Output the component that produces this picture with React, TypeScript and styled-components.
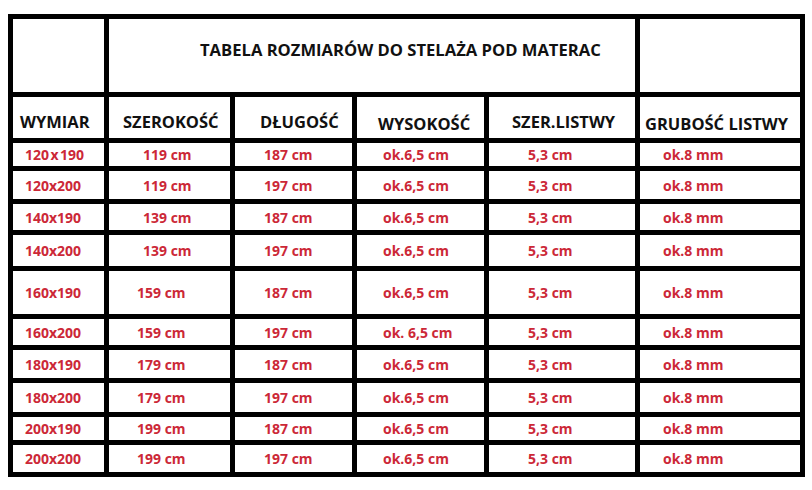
import styled, { createGlobalStyle } from "styled-components";

const GlobalStyle = createGlobalStyle`
  html, body {
    margin: 0;
    background: #ffffff;
  }
  body {
    font-family: "Open Sans", "Liberation Sans", sans-serif;
  }
`;

const COLS = [91, 121, 117, 127, 146, 160];
const ROWS = [73, 41, 23, 28, 26, 31, 43, 26, 28, 29, 23, 27];

const HEADERS: { label: string; pad: number; low?: boolean }[] = [
  { label: "WYMIAR", pad: 7 },
  { label: "SZEROKOŚĆ", pad: 14 },
  { label: "DŁUGOŚĆ", pad: 25 },
  { label: "WYSOKOŚĆ", pad: 21, low: true },
  { label: "SZER.LISTWY", pad: 23 },
  { label: "GRUBOŚĆ LISTWY", pad: 5, low: true },
];

const DATA_PAD = [12, 31, 29, 26, 39, 23];

// the width column sits a bit further left from 160x190 down
const padFor = (row: number, col: number) =>
  col === 1 ? (row < 4 ? 34 : 28) : DATA_PAD[col];

const ROWS_DATA: string[][] = [
  ["120\u200Ax\u200A190", "119 cm", "187 cm", "ok.6,5 cm", "5,3 cm", "ok.8 mm"],
  ["120x200", "119 cm", "197 cm", "ok.6,5 cm", "5,3 cm", "ok.8 mm"],
  ["140x190", "139 cm", "187 cm", "ok.6,5 cm", "5,3 cm", "ok.8 mm"],
  ["140x200", "139 cm", "197 cm", "ok.6,5 cm", "5,3 cm", "ok.8 mm"],
  ["160x190", "159 cm", "187 cm", "ok.6,5 cm", "5,3 cm", "ok.8 mm"],
  ["160x200", "159 cm", "197 cm", "ok. 6,5 cm", "5,3 cm", "ok.8 mm"],
  ["180x190", "179 cm", "187 cm", "ok.6,5 cm", "5,3 cm", "ok.8 mm"],
  ["180x200", "179 cm", "197 cm", "ok.6,5 cm", "5,3 cm", "ok.8 mm"],
  ["200x190", "199 cm", "187 cm", "ok.6,5 cm", "5,3 cm", "ok.8 mm"],
  ["200x200", "199 cm", "197 cm", "ok.6,5 cm", "5,3 cm", "ok.8 mm"],
];

const Page = styled.div`
  padding: 14px 0 0 8px;
`;

const Table = styled.div`
  display: grid;
  grid-template-columns: ${COLS.map((c) => `${c}px`).join(" ")};
  grid-template-rows: ${ROWS.map((r) => `${r}px`).join(" ")};
  gap: 5px;
  padding: 5px;
  width: max-content;
  background: #000000;
`;

const Cell = styled.div`
  background: #ffffff;
  display: flex;
  align-items: center;
  white-space: nowrap;
  overflow: hidden;
`;

const TitleCell = styled(Cell)`
  grid-column: 2 / span 4;
  align-items: flex-start;
  padding: 19px 0 0 91px;
  font-size: 16.6px;
  font-weight: 700;
  color: #111111;
`;

const HeadCell = styled(Cell)<{ $pad: number; $low?: boolean }>`
  align-items: flex-end;
  padding: 0 0 ${(p) => (p.$low ? 3 : 5)}px ${(p) => p.$pad}px;
  font-size: 16.5px;
  font-weight: 700;
  color: #111111;
`;

const DataCell = styled(Cell)<{ $pad: number }>`
  padding-left: ${(p) => p.$pad}px;
  font-size: 14px;
  font-weight: 700;
  color: #cc2837;
`;

export default function App() {
  return (
    <Page>
      <GlobalStyle />
      <Table>
        <Cell />
        <TitleCell>TABELA ROZMIARÓW DO STELAŻA POD MATERAC</TitleCell>
        <Cell />
        {HEADERS.map((h) => (
          <HeadCell key={h.label} $pad={h.pad} $low={h.low}>
            {h.label}
          </HeadCell>
        ))}
        {ROWS_DATA.map((row, i) =>
          row.map((v, j) => (
            <DataCell key={`${i}-${j}`} $pad={padFor(i, j)}>
              {v}
            </DataCell>
          ))
        )}
      </Table>
    </Page>
  );
}
